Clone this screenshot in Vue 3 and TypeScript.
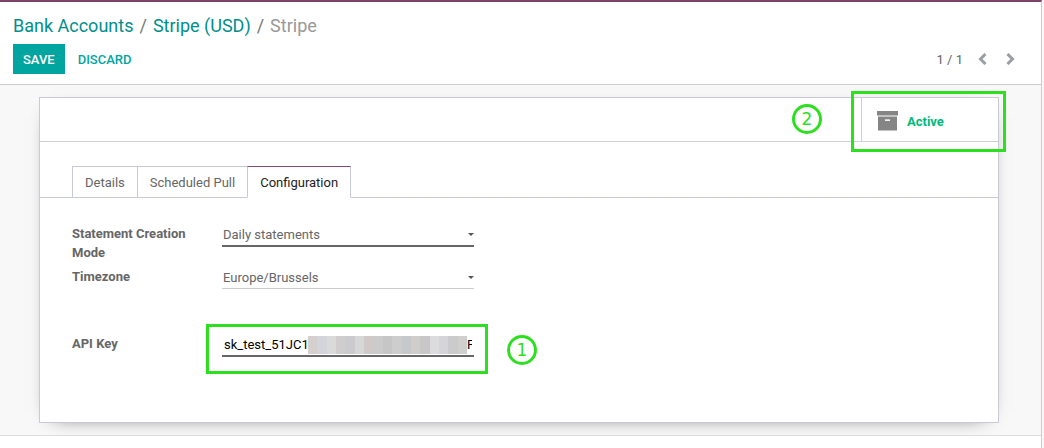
<script setup lang="ts">
import { ref } from 'vue'

const tabs = ['Details', 'Scheduled Pull', 'Configuration']
const activeTab = ref('Configuration')
const mode = ref('Daily statements')
const timezone = ref('Europe/Brussels')
const apiKey = ref('sk_test_51JC1')
const maskColors = [
  '#d5cfcd', '#d3d5da', '#dadada', '#cfcdce', '#cbcbcd', '#d8d7d8', '#d0c9c9', '#cbcbcc',
  '#c6c6c7', '#cecdce', '#c7c8ca', '#cfcecc', '#c8c6c7', '#dcdbdd', '#d5d4d8', '#cbcacd', '#cfcfce',
]
</script>

<template>
  <div class="page">
    <header class="control-panel">
      <nav class="breadcrumb" aria-label="Breadcrumb">
        <a href="#accounts">Bank Accounts</a>
        <span class="slash">/</span>
        <a href="#stripe-usd">Stripe (USD)</a>
        <span class="slash">/</span>
        <span class="current">Stripe</span>
      </nav>
      <div class="actions">
        <button class="save" type="button">SAVE</button>
        <button class="discard" type="button">DISCARD</button>
        <div class="pager">
          <span>1 / 1</span>
          <button type="button" aria-label="Previous">
            <svg width="10" height="12" viewBox="0 0 10 12"><path d="M7.5 1 2.5 6l5 5" /></svg>
          </button>
          <button type="button" aria-label="Next">
            <svg width="10" height="12" viewBox="0 0 10 12"><path d="M2.5 1l5 5-5 5" /></svg>
          </button>
        </div>
      </div>
    </header>

    <main class="content">
      <section class="sheet">
        <div class="button-box">
          <span class="marker marker-two">2</span>
          <button class="stat" type="button">
            <svg width="21" height="20" viewBox="0 0 21 20" aria-hidden="true">
              <path fill="#858585" d="M0 0h21v4.4H0zM1 5.4h19v14.1H1z" />
              <path fill="#fff" d="M8 8.4h5v1.5H8z" />
            </svg>
            <span>Active</span>
          </button>
          <div class="highlight highlight-stat"></div>
        </div>

        <div class="tabs" role="tablist">
          <button
            v-for="tab in tabs"
            :key="tab"
            type="button"
            role="tab"
            class="tab"
            :class="{ active: tab === activeTab }"
            :aria-selected="tab === activeTab"
            @click="activeTab = tab"
          >{{ tab }}</button>
        </div>

        <form class="fields" @submit.prevent>
          <label for="mode">Statement Creation Mode</label>
          <div class="control required">
            <select id="mode" v-model="mode"><option>Daily statements</option></select>
            <svg class="caret" width="6" height="3" viewBox="0 0 6 3"><path d="M0 0h6L3 3z" /></svg>
          </div>
          <label for="timezone">Timezone</label>
          <div class="control">
            <select id="timezone" v-model="timezone"><option>Europe/Brussels</option></select>
            <svg class="caret" width="6" height="3" viewBox="0 0 6 3"><path d="M0 0h6L3 3z" /></svg>
          </div>
          <label class="key-label" for="key">API Key</label>
          <div class="control required key">
            <input id="key" v-model="apiKey" type="text" />
            <div class="mask">
              <i v-for="(color, index) in maskColors" :key="index" :style="{ background: color }"></i>
            </div>
            <span class="tail">F</span>
            <div class="highlight highlight-key"></div>
            <span class="marker marker-one">1</span>
          </div>
        </form>
      </section>
    </main>
    <div class="footer"></div>
  </div>
</template>

<style>
body {
  background: #fbf7f8;
}
</style>

<style scoped>
.page {
  box-sizing: border-box;
  display: flex;
  flex-direction: column;
  min-height: 100vh;
  margin-right: 2px;
  border-top: 2px solid #7c4269;
  border-right: 1px solid #c9ccd6;
  background: #fff;
  color: #666;
  font: 13px/19px Roboto, "Liberation Sans", sans-serif;
  overflow: hidden;
}
button, input, select {
  box-sizing: border-box;
  margin: 0;
  padding: 0;
  border: 0;
  border-radius: 0;
  background: none;
  color: inherit;
  font: inherit;
  outline: none;
}
.control-panel {
  padding: 10px 26px 10px 13px;
  border-bottom: 1px solid #ccc;
}
.breadcrumb {
  display: flex;
  gap: 6px;
  font-size: 18px;
  line-height: 28px;
}
.breadcrumb a {
  color: #008f8c;
  text-decoration: none;
}
.slash { color: #777; }
.current { color: #999; }
.actions {
  display: flex;
  align-items: center;
  margin-top: 4px;
}
.save, .discard {
  height: 30px;
  font-weight: 500;
}
.save {
  padding: 0 10px;
  background: #00a5a0;
  color: #fff;
}
.discard {
  padding: 0 13px;
  color: #00a5a0;
}
.pager {
  display: flex;
  align-items: center;
  gap: 17px;
  margin-left: auto;
}
.pager span { margin-right: -2px; }
.pager button {
  display: flex;
}
.pager path {
  fill: none;
  stroke: #9a9fa4;
  stroke-width: 3;
}
.content {
  flex: 1;
  display: flex;
  padding: 12px 42px 12px 39px;
  border-bottom: 1px solid #ddd;
  background: #f8f8f8;
  overflow: hidden;
}
.sheet {
  flex: 1;
  border: 1px solid #c8cbd6;
  background: #fff;
  box-shadow: 0 5px 20px -15px #000;
}
.button-box {
  position: relative;
  display: flex;
  align-items: stretch;
  justify-content: flex-end;
  height: 43px;
  border-bottom: 1px solid #cdd0d9;
}
.stat {
  display: flex;
  align-items: center;
  gap: 9px;
  width: 137px;
  padding: 3px 0 0 15px;
  border-left: 1px solid #cdd0d9;
  color: #00b97a;
  font-weight: 700;
}
.highlight {
  position: absolute;
  box-sizing: border-box;
  border: 3px solid #2ce01f;
  pointer-events: none;
}
.highlight-stat {
  top: -7px;
  right: -8px;
  width: 155px;
  height: 61px;
}
.marker {
  position: absolute;
  box-sizing: border-box;
  width: 30px;
  height: 30px;
  border: 3px solid #2ce01f;
  border-radius: 50%;
  color: #2ce01f;
  font: 17px/24px "DejaVu Sans", sans-serif;
  text-align: center;
}
.marker-two {
  top: 6px;
  right: 176px;
}
.tabs {
  display: flex;
  margin-top: 24px;
  padding-left: 32px;
  border-bottom: 1px solid #c8cbd6;
}
.tab {
  height: 32px;
  margin: 0 0 -1px -1px;
  padding: 0 12px;
  border: 1px solid #c8cbd6;
}
.tab:first-child { margin-left: 0; }
.tab.active {
  border-top-color: #85477a;
  border-bottom-color: #fff;
  background: #fff;
  color: #222;
}
.fields {
  display: grid;
  grid-template-columns: 150px 252px;
  align-items: start;
  row-gap: 5px;
  padding: 26px 32px 0;
}
.fields label {
  max-width: 130px;
  font-weight: 700;
}
.control {
  position: relative;
  box-sizing: border-box;
  height: 22px;
  border-bottom: 1px solid #ccc;
}
.required { height: 23px; border-bottom: 2px solid #666; }
.control select, .control input {
  display: block;
  width: 100%;
  height: 21px;
  padding: 0 1px;
  appearance: none;
}
.caret {
  position: absolute;
  top: 9px;
  right: 0;
  fill: #555;
}
.key-label, .key { margin-top: 40px; }
.control.key input {
  padding-left: 2px;
  color: #000;
}
.mask {
  position: absolute;
  top: 2px;
  left: 86px;
  right: 7px;
  height: 18px;
  display: flex;
}
.mask i { flex: 1; }
.tail {
  position: absolute;
  top: 1px;
  right: 2px;
  width: 5px;
  overflow: hidden;
  color: #000;
}
.highlight-key {
  top: -10px;
  left: -16px;
  width: 282px;
  height: 50px;
}
.marker-one {
  top: 1px;
  right: -63px;
}
.footer { height: 12px; }
</style>
